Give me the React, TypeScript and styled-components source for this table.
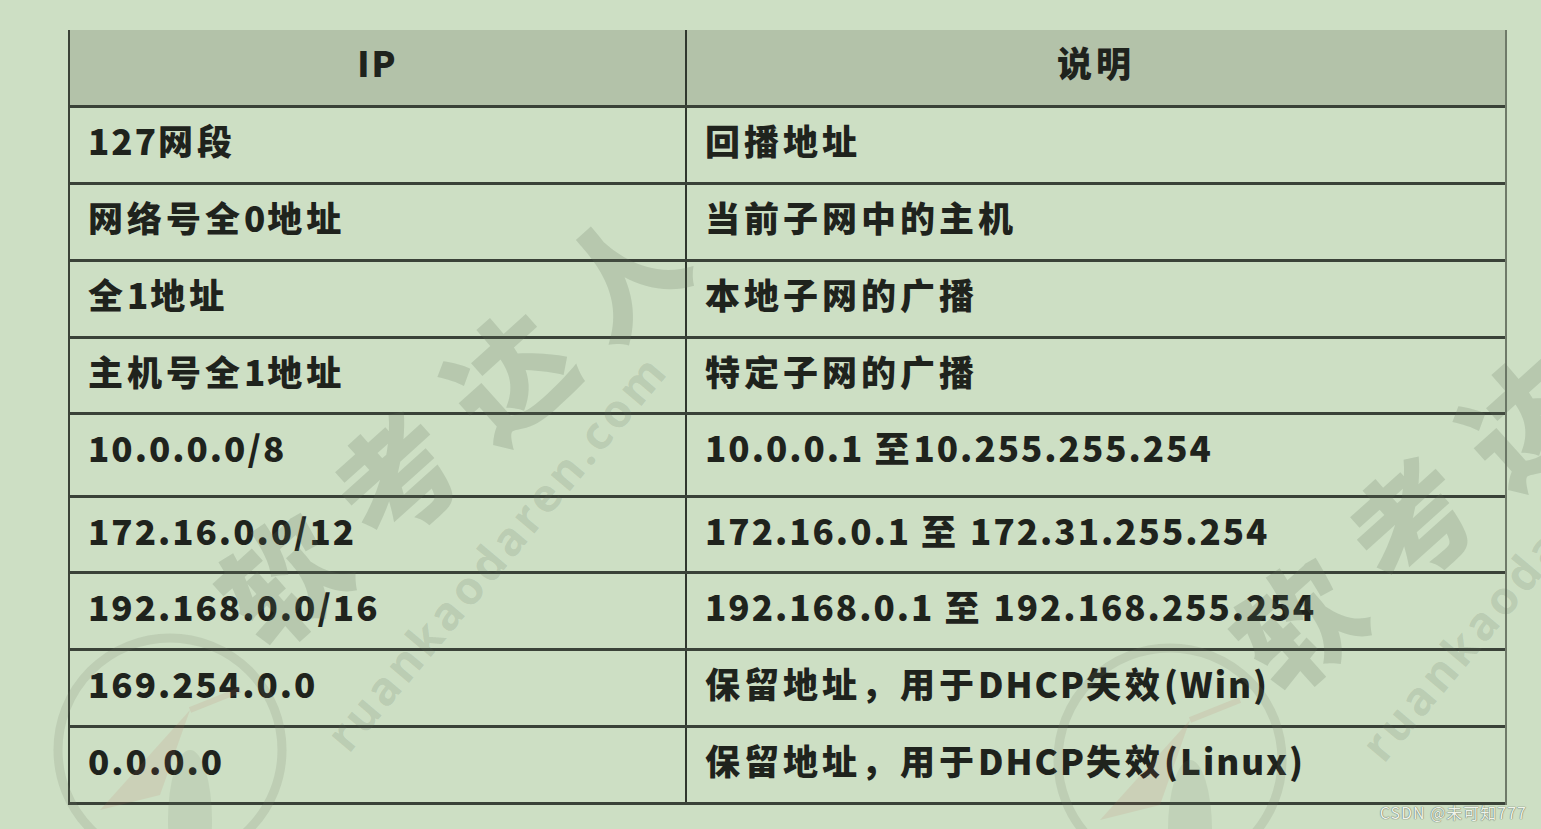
import React from "react";
import styled, { createGlobalStyle } from "styled-components";

const GlobalStyle = createGlobalStyle`
  html, body {
    margin: 0;
    padding: 0;
    background: #cddfc4;
  }
  body {
    font-family: "Noto Sans CJK SC", "Noto Sans", sans-serif;
  }
`;

const Page = styled.div`
  position: relative;
  width: 1541px;
  height: 829px;
  overflow: hidden;
  background: #cddfc4;
  padding: 30px 0 0 68px;
  box-sizing: border-box;
`;

const Table = styled.div`
  width: 1439px;
  display: flex;
  flex-direction: column;
  border-left: 2px solid #3a4237;
  border-right: 2px solid #6f7a69;
  box-sizing: border-box;
`;

const Row = styled.div<{ $h: number; $head?: boolean }>`
  display: grid;
  grid-template-columns: 617px 1fr;
  height: ${(p) => p.$h}px;
  box-sizing: border-box;
  border-bottom: 3px solid #3a4238;
  background: ${(p) => (p.$head ? "#b3c2a9" : "transparent")};
`;

const Cell = styled.div<{ $head?: boolean; $first?: boolean }>`
  box-sizing: border-box;
  border-right: ${(p) => (p.$first ? "2px solid #30372e" : "none")};
  padding: ${(p) => (p.$head ? "12px 0 0 0" : "12px 0 0 18px")};
  text-align: ${(p) => (p.$head ? "center" : "left")};
  font-family: "Noto Sans CJK SC", "Noto Sans", sans-serif;
  font-weight: 900;
  font-size: 35px;
  line-height: 40px;
  letter-spacing: 2px;
  color: #1f231d;
  white-space: nowrap;
`;

const Wide = styled.span`
  letter-spacing: 4px;
`;

const Overlay = styled.div`
  position: absolute;
  inset: 0;
  pointer-events: none;
`;

const WaterChars = styled.div<{ $x: number; $y: number }>`
  position: absolute;
  left: ${(p) => p.$x}px;
  top: ${(p) => p.$y}px;
  transform: rotate(-42deg);
  transform-origin: left center;
  font-family: "Noto Sans CJK SC", sans-serif;
  font-weight: 900;
  font-size: 120px;
  letter-spacing: 32px;
  line-height: 1;
  color: rgba(95, 110, 90, 0.2);
  white-space: nowrap;
`;

const WaterUrl = styled.div<{ $x: number; $y: number }>`
  position: absolute;
  left: ${(p) => p.$x}px;
  top: ${(p) => p.$y}px;
  transform: rotate(-50deg);
  transform-origin: left center;
  font-family: "Noto Sans", "Open Sans", sans-serif;
  font-weight: 700;
  font-size: 46px;
  letter-spacing: 4px;
  line-height: 1;
  color: rgba(95, 110, 90, 0.18);
  white-space: nowrap;
`;

const Logo = styled.svg<{ $x: number; $y: number }>`
  position: absolute;
  left: ${(p) => p.$x}px;
  top: ${(p) => p.$y}px;
`;

const Credit = styled.div`
  position: absolute;
  right: 14px;
  bottom: 7px;
  font-family: "Noto Sans CJK SC", "Liberation Sans", sans-serif;
  font-size: 16px;
  line-height: 20px;
  color: #eef3ea;
  text-shadow: 0 0 1px #5f695a, 0 0 1px #5f695a;
  letter-spacing: 1px;
`;

const rows: { ip: string; desc: string; h: number }[] = [
  { ip: "127网段", desc: "回播地址", h: 77 },
  { ip: "网络号全0地址", desc: "当前子网中的主机", h: 77 },
  { ip: "全1地址", desc: "本地子网的广播", h: 77 },
  { ip: "主机号全1地址", desc: "特定子网的广播", h: 76 },
  { ip: "10.0.0.0/8", desc: "10.0.0.1 至10.255.255.254", h: 83 },
  { ip: "172.16.0.0/12", desc: "172.16.0.1 至 172.31.255.254", h: 76 },
  { ip: "192.168.0.0/16", desc: "192.168.0.1 至 192.168.255.254", h: 77 },
  { ip: "169.254.0.0", desc: "保留地址，用于DHCP失效(Win)", h: 77 },
  { ip: "0.0.0.0", desc: "保留地址，用于DHCP失效(Linux)", h: 77 },
];

const CJK = /([\u3000-\u9fff\uff00-\uffef]+)/;

const Mixed = ({ text }: { text: string }) => (
  <>
    {text.split(CJK).map((part, i) =>
      CJK.test(part) ? <Wide key={i}>{part}</Wide> : <React.Fragment key={i}>{part}</React.Fragment>
    )}
  </>
);

const LogoMark = ({ x, y }: { x: number; y: number }) => (
  <Logo $x={x} $y={y} width="260" height="260" viewBox="0 0 260 260">
    <circle cx="130" cy="130" r="112" fill="none" stroke="rgba(110,120,100,0.16)" strokeWidth="9" />
    <path d="M60 190 L150 90 L120 175 Z" fill="rgba(190,110,90,0.12)" />
    <path d="M150 90 L200 70" stroke="rgba(190,110,90,0.12)" strokeWidth="6" />
    <ellipse cx="150" cy="200" rx="22" ry="70" fill="rgba(110,120,100,0.12)" />
  </Logo>
);

export default function App() {
  return (
    <>
      <GlobalStyle />
      <Page>
        <Table>
          <Row $h={78} $head>
            <Cell $head $first>IP</Cell>
            <Cell $head>
              <Wide>说明</Wide>
            </Cell>
          </Row>
          {rows.map((r) => (
            <Row key={r.ip} $h={r.h}>
              <Cell $first>
                <Mixed text={r.ip} />
              </Cell>
              <Cell>
                <Mixed text={r.desc} />
              </Cell>
            </Row>
          ))}
        </Table>
        <Overlay>
          <LogoMark x={40} y={620} />
          <LogoMark x={1040} y={630} />
          <WaterChars $x={235} $y={555}>软考达人</WaterChars>
          <WaterUrl $x={335} $y={720}>ruankaodaren.com</WaterUrl>
          <WaterChars $x={1250} $y={600}>软考达人</WaterChars>
          <WaterUrl $x={1370} $y={730}>ruankaodaren.com</WaterUrl>
        </Overlay>
        <Credit>CSDN @未可知777</Credit>
      </Page>
    </>
  );
}
